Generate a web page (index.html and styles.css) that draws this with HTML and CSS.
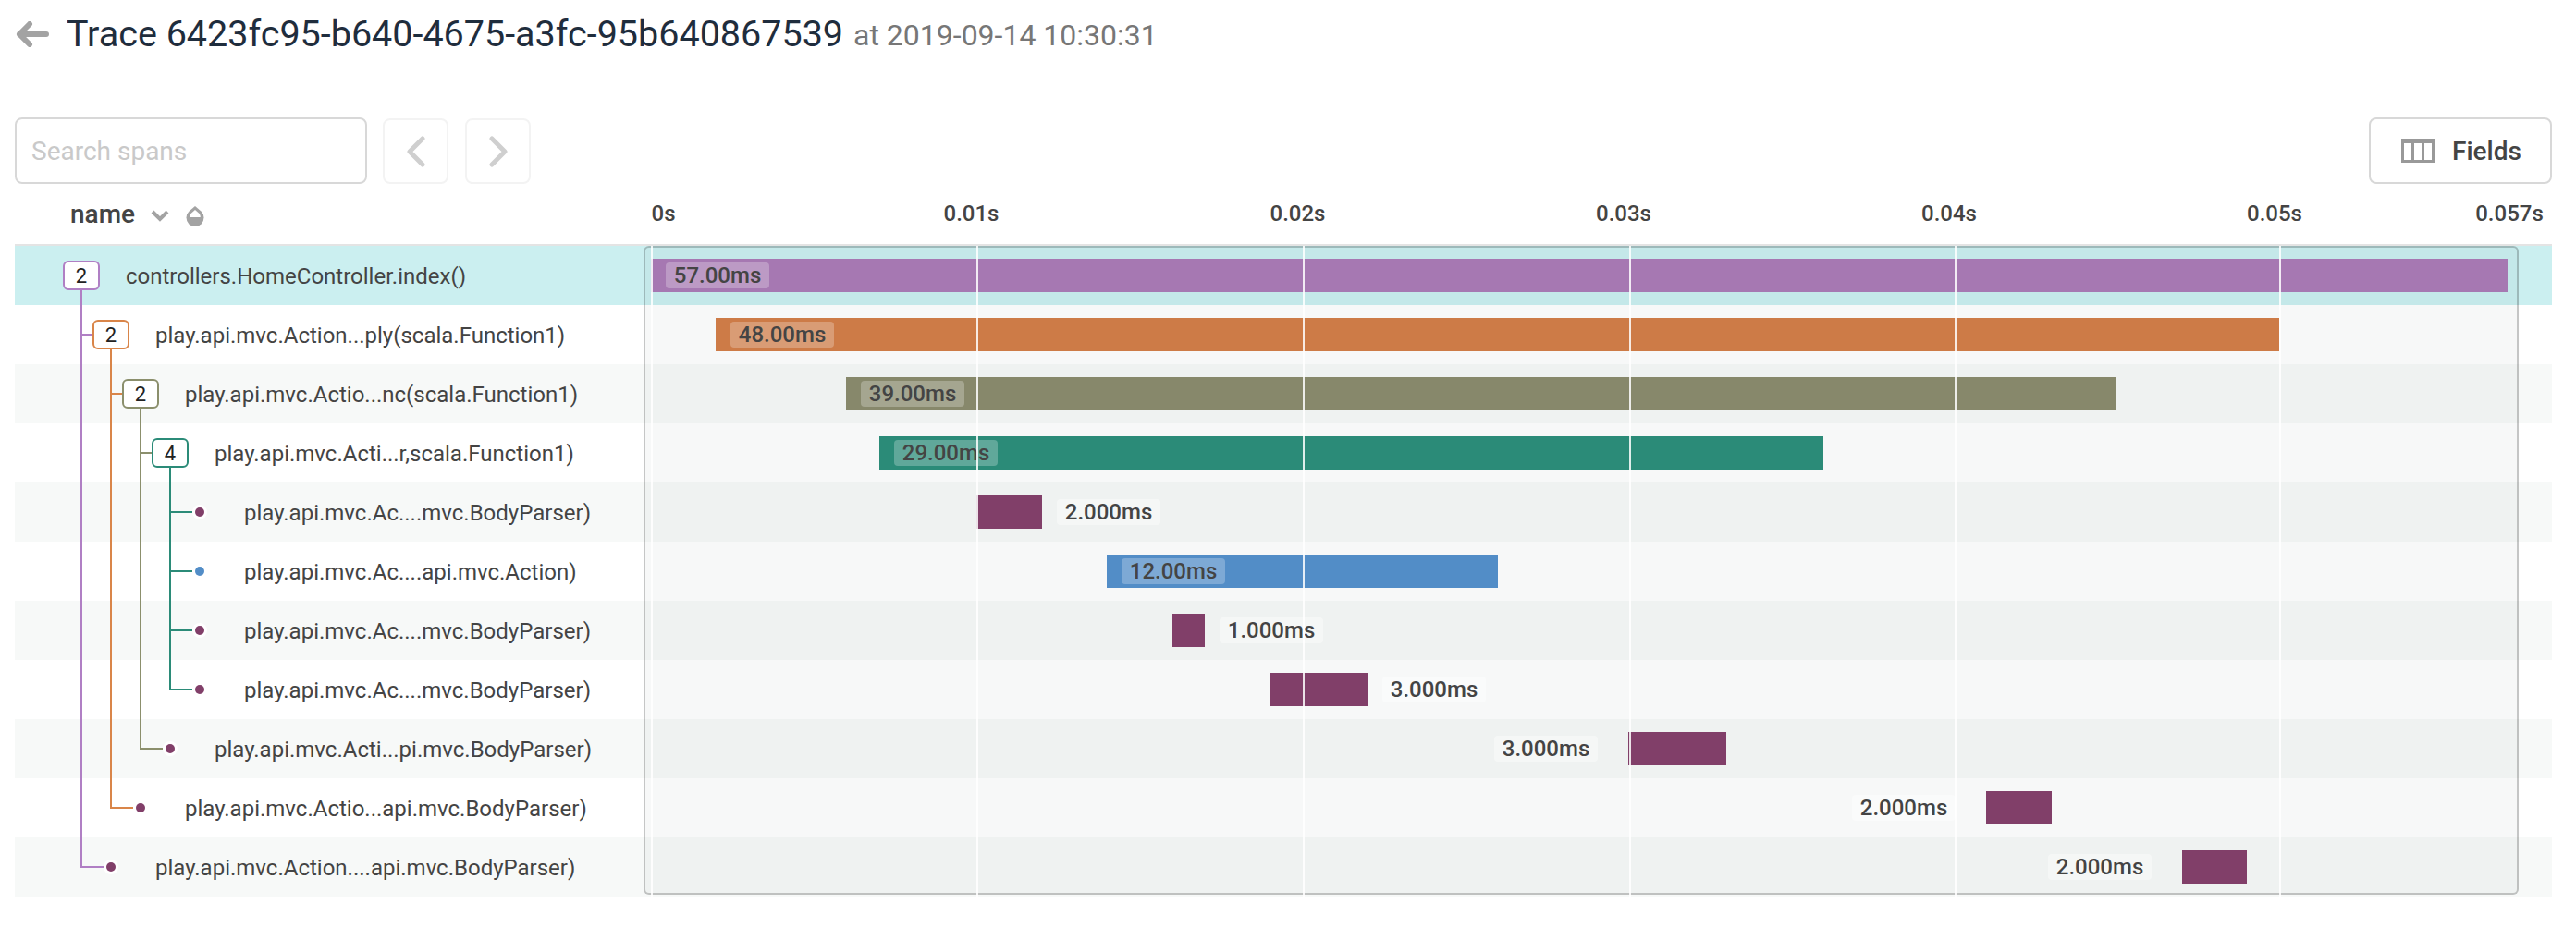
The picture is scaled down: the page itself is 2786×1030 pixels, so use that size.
FILE: index.html
```html
<!DOCTYPE html>
<html lang="en">
<head>
<meta charset="utf-8">
<title>Trace 6423fc95-b640-4675-a3fc-95b640867539</title>
<link rel="stylesheet" href="styles.css">
</head>
<body>
<main class="page">
  <header class="title-bar">
    <svg class="back-icon" viewBox="0 0 36 28" aria-hidden="true"><path d="M15 3 4 14l11 11M4 14h29"/></svg>
    <h1 class="title">Trace 6423fc95-b640-4675-a3fc-95b640867539</h1>
    <span class="timestamp">at 2019-09-14 10:30:31</span>
  </header>

  <div class="toolbar">
    <input class="search" type="text" placeholder="Search spans">
    <button class="nav-btn" type="button" aria-label="Previous"><svg viewBox="0 0 20 34" aria-hidden="true"><path d="M17 3 3 17l14 14"/></svg></button>
    <button class="nav-btn" type="button" aria-label="Next"><svg viewBox="0 0 20 34" aria-hidden="true"><path d="M3 3l14 14L3 31"/></svg></button>
    <button class="fields-btn" type="button">
      <svg class="fields-icon" viewBox="0 0 36 26" aria-hidden="true"><path d="M1.5 3v21.5h33V3M12.5 3v21.5M23.5 3v21.5"/><path class="fields-top" d="M0 2.5h36"/></svg>
      <span>Fields</span>
    </button>
  </div>

  <div class="col-head">
    <div class="name-head">
      <span class="name-label">name</span>
      <svg class="sort-icon" viewBox="0 0 20 14" aria-hidden="true"><path d="M2 3l8 8 8-8"/></svg>
      <svg class="drop-icon" viewBox="0 0 20 22" aria-hidden="true"><path class="drop-fill" d="M10 0 16.7 5.8A9.5 9.5 0 1 1 3.3 5.8Z"/><path class="drop-hole" d="M10 4 14.5 8Q15.8 9.8 15.8 12H4.2Q4.2 9.8 5.5 8Z"/></svg>
    </div>
    <div class="axis">
      <span class="tick-label" style="left:21.5px">0s</span>
      <span class="tick-label" style="left:354.5px">0.01s</span>
      <span class="tick-label" style="left:707.5px">0.02s</span>
      <span class="tick-label" style="left:1060px">0.03s</span>
      <span class="tick-label" style="left:1412px">0.04s</span>
      <span class="tick-label" style="left:1764px">0.05s</span>
      <span class="tick-label" style="left:2018px">0.057s</span>
    </div>
  </div>

  <div class="rows">
    <svg class="tree" viewBox="0 0 700 704" aria-hidden="true">
      <path class="line-purple" d="M72 48V672H96M72 96H84"/>
      <path class="line-orange" d="M104 112V608H128M104 160H116"/>
      <path class="line-olive" d="M136 176V544H160M136 224H148"/>
      <path class="line-teal" d="M168 240V480H192M168 288H192M168 352H192M168 416H192"/>
    </svg>

    <div class="frame"></div>
    <i class="grid-line" style="left:688px"></i>
    <i class="grid-line" style="left:1040px"></i>
    <i class="grid-line" style="left:1393px"></i>
    <i class="grid-line" style="left:1746px"></i>
    <i class="grid-line" style="left:2098px"></i>
    <i class="grid-line" style="left:2449px"></i>

    <div class="row selected">
      <div class="name-cell d0"><span class="marker"><b class="badge b-purple">2</b></span><span class="span-name">controllers.HomeController.index()</span></div>
      <div class="track"><div class="bar c-purple" style="left:8px;width:2008px"><span class="pill inside">57.00ms</span></div></div>
    </div>
    <div class="row">
      <div class="name-cell d1"><span class="marker"><b class="badge b-orange">2</b></span><span class="span-name">play.api.mvc.Action...ply(scala.Function1)</span></div>
      <div class="track"><div class="bar c-orange" style="left:78px;width:1691px"><span class="pill inside">48.00ms</span></div></div>
    </div>
    <div class="row">
      <div class="name-cell d2"><span class="marker"><b class="badge b-olive">2</b></span><span class="span-name">play.api.mvc.Actio...nc(scala.Function1)</span></div>
      <div class="track"><div class="bar c-olive" style="left:219px;width:1373px"><span class="pill inside">39.00ms</span></div></div>
    </div>
    <div class="row">
      <div class="name-cell d3"><span class="marker"><b class="badge b-teal">4</b></span><span class="span-name">play.api.mvc.Acti...r,scala.Function1)</span></div>
      <div class="track"><div class="bar c-teal" style="left:255px;width:1021px"><span class="pill inside">29.00ms</span></div></div>
    </div>
    <div class="row">
      <div class="name-cell d4"><span class="marker"><b class="dot c-plum"></b></span><span class="span-name">play.api.mvc.Ac....mvc.BodyParser)</span></div>
      <div class="track"><div class="bar c-plum" style="left:360px;width:71px"><span class="pill after">2.000ms</span></div></div>
    </div>
    <div class="row">
      <div class="name-cell d4"><span class="marker"><b class="dot c-blue"></b></span><span class="span-name">play.api.mvc.Ac....api.mvc.Action)</span></div>
      <div class="track"><div class="bar c-blue" style="left:501px;width:423px"><span class="pill inside">12.00ms</span></div></div>
    </div>
    <div class="row">
      <div class="name-cell d4"><span class="marker"><b class="dot c-plum"></b></span><span class="span-name">play.api.mvc.Ac....mvc.BodyParser)</span></div>
      <div class="track"><div class="bar c-plum" style="left:572px;width:35px"><span class="pill after">1.000ms</span></div></div>
    </div>
    <div class="row">
      <div class="name-cell d4"><span class="marker"><b class="dot c-plum"></b></span><span class="span-name">play.api.mvc.Ac....mvc.BodyParser)</span></div>
      <div class="track"><div class="bar c-plum" style="left:677px;width:106px"><span class="pill after">3.000ms</span></div></div>
    </div>
    <div class="row">
      <div class="name-cell d3"><span class="marker"><b class="dot c-plum"></b></span><span class="span-name">play.api.mvc.Acti...pi.mvc.BodyParser)</span></div>
      <div class="track"><div class="bar c-plum" style="left:1065px;width:106px"><span class="pill before">3.000ms</span></div></div>
    </div>
    <div class="row">
      <div class="name-cell d2"><span class="marker"><b class="dot c-plum"></b></span><span class="span-name">play.api.mvc.Actio...api.mvc.BodyParser)</span></div>
      <div class="track"><div class="bar c-plum" style="left:1452px;width:71px"><span class="pill before">2.000ms</span></div></div>
    </div>
    <div class="row">
      <div class="name-cell d1"><span class="marker"><b class="dot c-plum"></b></span><span class="span-name">play.api.mvc.Action....api.mvc.BodyParser)</span></div>
      <div class="track"><div class="bar c-plum" style="left:1664px;width:70px"><span class="pill before">2.000ms</span></div></div>
    </div>
  </div>
</main>
</body>
</html>
```
FILE: styles.css
```css
* { box-sizing: border-box; }
html, body { margin: 0; background: #fff; }
body { font-family: Roboto, "Liberation Sans", sans-serif; color: #444; }

.page { padding: 0 26px 0 16px; }

.title-bar { display: flex; align-items: center; height: 74px; margin-bottom: 53px; }
.back-icon { width: 36px; height: 28px; margin: 0 19px 0 1px; fill: none; stroke: #a3a3a3; stroke-width: 6; stroke-linecap: round; stroke-linejoin: round; }
.title { margin: 0 11px 0 0; font-size: 39.5px; font-weight: 400; color: #1f2d3d; line-height: 1; }
.timestamp { font-size: 32px; color: #777; padding-top: 2px; }

.toolbar { display: flex; align-items: flex-end; height: 72px; gap: 17px; }
.search { width: 381px; height: 72px; padding: 0 16px; border: 2px solid #d8d8d8; border-radius: 8px; font: 400 28px Roboto, sans-serif; color: #444; outline: none; }
.search::placeholder { color: #c9c9c9; opacity: 1; }
.nav-btn { display: flex; align-items: center; justify-content: center; width: 71px; height: 71px; padding: 0; background: #fff; border: 2px solid #f3f3f3; border-radius: 8px; }
.nav-btn + .nav-btn { margin-left: 1px; }
.nav-btn svg { width: 20px; height: 34px; fill: none; stroke: #cfcfcf; stroke-width: 5; stroke-linecap: round; stroke-linejoin: round; }
.fields-btn { display: flex; align-items: center; justify-content: center; gap: 19px; width: 198px; height: 72px; margin-left: auto; padding: 0 0 0 2px; background: #fff; border: 2px solid #d8d8d8; border-radius: 8px; font: 500 28px Roboto, sans-serif; color: #444; }
.fields-icon { width: 36px; height: 26px; fill: none; stroke: #999; stroke-width: 3; }
.fields-top { stroke-width: 5; }

.col-head { display: flex; height: 67px; border-bottom: 2px solid #e4e4e4; }
.name-head { display: flex; align-items: center; width: 680px; padding-left: 60px; }
.name-label { font-size: 28px; font-weight: 500; color: #444; }
.sort-icon { width: 20px; height: 14px; margin-left: 17px; margin-top: 2px; fill: none; stroke: #a3a3a3; stroke-width: 4; }
.drop-icon { width: 20px; height: 22px; margin-left: 18px; margin-top: 4px; }
.drop-fill { fill: #a3a3a3; }
.drop-hole { fill: #fff; }
.axis { position: relative; flex: 1; }
.tick-label { position: absolute; top: 18px; transform: translateX(-50%); font-size: 24px; font-weight: 500; line-height: 28px; color: #444; white-space: nowrap; }

.rows { position: relative; }
.tree { position: absolute; left: 0; top: 0; z-index: 1; width: 700px; height: 704px; fill: none; stroke-width: 2; }
.line-purple { stroke: #b07fc4; }
.line-orange { stroke: #d98549; }
.line-olive { stroke: #8b8f6c; }
.line-teal { stroke: #2b8b78; }

.frame { position: absolute; left: 680px; top: 0; z-index: 1; width: 2028px; height: 702px; background: rgba(30, 60, 50, .035); border: 2px solid rgba(0, 0, 0, .2); border-radius: 6px; }
.grid-line { position: absolute; top: 0; bottom: 0; z-index: 3; width: 2px; background: rgba(255, 255, 255, .85); }

.row { display: flex; height: 64px; background: #fff; }
.row:nth-of-type(even) { background: #f7f9f8; }
.row.selected { background: #cbeff0; }

.name-cell { display: flex; align-items: center; width: 680px; flex: none; font-size: 24px; }
.d0 { padding-left: 52px; }
.d1 { padding-left: 84px; }
.d2 { padding-left: 116px; }
.d3 { padding-left: 148px; }
.d4 { padding-left: 180px; }
.marker { position: relative; z-index: 2; display: flex; align-items: center; justify-content: center; width: 40px; margin-right: 28px; flex: none; }
.badge { display: flex; align-items: center; justify-content: center; width: 40px; height: 32px; background: #fff; border: 2px solid; border-radius: 6px; font-size: 22px; font-weight: 400; color: #222; }
.b-purple { border-color: #b07fc4; }
.b-orange { border-color: #d98549; }
.b-olive { border-color: #8b8f6c; }
.b-teal { border-color: #2b8b78; }
.dot { display: block; width: 10px; height: 10px; border-radius: 50%; box-shadow: 0 0 0 3px #fff; }
.span-name { padding-top: 2px; color: #444; white-space: nowrap; }

.track { position: relative; z-index: 2; flex: 1; }
.bar { position: absolute; top: 14px; height: 36px; }
.c-purple { background: #a678b2; }
.c-orange { background: #cd7b47; }
.c-olive { background: #87886b; }
.c-teal { background: #2b8b78; }
.c-plum { background: #813f69; }
.c-blue { background: #528dc7; }

.pill { position: absolute; top: 4px; width: 112px; height: 28px; border-radius: 4px; font-size: 24px; font-weight: 500; line-height: 28px; text-align: center; color: #444; white-space: nowrap; }
.inside { left: 16px; background: rgba(255, 255, 255, .25); }
.after { left: calc(100% + 16px); background: rgba(255, 255, 255, .4); }
.before { right: calc(100% + 33px); background: rgba(255, 255, 255, .4); }
```
